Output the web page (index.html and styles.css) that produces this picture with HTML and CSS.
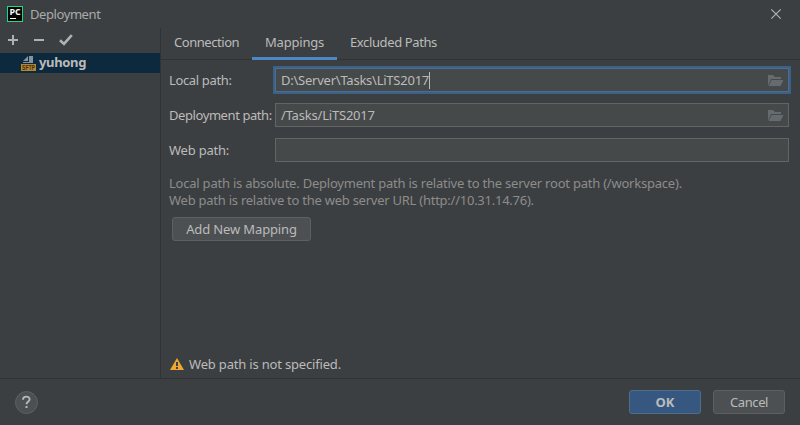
FILE: index.html
```html
<!DOCTYPE html>
<html lang="en">
<head>
<meta charset="utf-8">
<title>Deployment</title>
<link rel="stylesheet" href="styles.css">
</head>
<body>
<div class="dialog">
  <header class="titlebar">
    <svg class="logo" width="16" height="16" viewBox="0 0 16 16"><rect x=".5" y=".5" width="15" height="15" fill="#050505" stroke="#21d789"/><text x="2.4" y="9" class="logo-text" textLength="11.2" lengthAdjust="spacingAndGlyphs">PC</text><path d="M3 12.5h6" stroke="#fff"/></svg>
    <span class="title">Deployment</span>
    <svg class="close" width="10" height="10" viewBox="0 0 10 10"><path d="M.3.3l9.4 9.4M9.7.3L.3 9.7" stroke="#b4b6b7" stroke-width="1.1"/></svg>
  </header>
  <div class="main">
    <aside class="sidebar">
      <div class="toolbar">
        <svg width="10" height="10" viewBox="0 0 10 10"><path d="M5 0v10M0 5h10" stroke="#afb1b3" stroke-width="2"/></svg>
        <svg width="10" height="10" viewBox="0 0 10 10"><path d="M0 5h10" stroke="#afb1b3" stroke-width="2"/></svg>
        <svg class="check" width="14" height="12" viewBox="0 0 14 12"><path d="M1 6.2l4 3.7L12.8 1.2" fill="none" stroke="#afb1b3" stroke-width="2.6"/></svg>
      </div>
      <div class="server">
        <svg class="sftp-icon" width="15" height="16" viewBox="0 0 15 16"><path d="M2 6L7 1v5zM8 1h4v7H2V7h6z" fill="#87939a"/><rect y="9" width="15" height="7" fill="#b38632"/><text x="1" y="15" class="sftp" textLength="13" lengthAdjust="spacingAndGlyphs">SFTP</text></svg>
        <span class="server-name">yuhong</span>
      </div>
    </aside>
    <section class="content">
      <nav class="tabs">
        <div class="tab tab-connection"><span class="t-connection">Connection</span></div>
        <div class="tab tab-mappings active"><span class="t-mappings">Mappings</span></div>
        <div class="tab"><span class="t-excluded">Excluded Paths</span></div>
      </nav>
      <div class="form">
        <div class="row"><label class="l-local">Local path:</label>
          <div class="field focused"><span class="v-local">D:\Server\Tasks\LiTS2017</span><i class="caret"></i>
            <svg class="folder" width="16" height="12" viewBox="0 0 16 12"><path d="M0 11V0h5l2 2h6v2H3z" fill="#656b6e"/><path d="M3.5 5H15.5L12.5 11H.7z" fill="#656b6e"/></svg></div></div>
        <div class="row"><label class="l-deploy">Deployment path:</label>
          <div class="field"><span class="v-deploy">/Tasks/LiTS2017</span>
            <svg class="folder" width="16" height="12" viewBox="0 0 16 12"><path d="M0 11V0h5l2 2h6v2H3z" fill="#656b6e"/><path d="M3.5 5H15.5L12.5 11H.7z" fill="#656b6e"/></svg></div></div>
        <div class="row"><label class="l-web">Web path:</label><div class="field"></div></div>
      </div>
      <div class="hint"><div><span class="h-one">Local path is absolute. Deployment path is relative to the server root path (/workspace).</span></div><div><span class="h-two">Web path is relative to the web server URL (http://10.31.14.76).</span></div></div>
      <button class="btn add"><span class="b-add">Add New Mapping</span></button>
      <div class="warning">
        <svg width="14" height="12" viewBox="0 0 14 12"><path d="M7 0l7 12H0z" fill="#f0a732"/><path d="M6 4h2v4H6zM6 9h2v2H6z" fill="#3c3f41"/></svg>
        <span class="w-text">Web path is not specified.</span>
      </div>
    </section>
  </div>
  <footer class="footer">
    <svg class="help" width="23" height="23" viewBox="0 0 23 23"><circle cx="11.5" cy="11.5" r="11" fill="#4c5052" stroke="#5e6162"/><path d="M8 8.8c0-4.2 6.6-4 6.6-.5 0 2.4-3.1 2.5-3.1 5" fill="none" stroke="#b5b7b8" stroke-width="1.9"/><path d="M10.5 15h2v2h-2z" fill="#b5b7b8"/></svg>
    <button class="btn ok"><span class="b-ok">OK</span></button>
    <button class="btn cancel"><span class="b-cancel">Cancel</span></button>
  </footer>
</div>
</body>
</html>
```
FILE: styles.css
```css
* { box-sizing: border-box; }
body { margin: 0; background: #3c3f41; }
.dialog { width: 800px; height: 425px; display: flex; flex-direction: column; overflow: hidden; background: #3c3f41; color: #bbbbbb; font: 13px/18px "Noto Sans", "Open Sans", sans-serif; white-space: nowrap; }
svg { display: block; flex: none; overflow: visible; }
.titlebar { height: 28px; display: flex; align-items: center; padding: 0 19px 0 7px; }
.logo-text { font: bold 8px "Open Sans", sans-serif; fill: #fff; }
.title { margin-left: 7px; color: #a9abac; letter-spacing: -.42px; }
.close { margin-left: auto; }
.main { height: 350px; display: flex; }
.sidebar { width: 160px; }
.toolbar { height: 24px; margin-bottom: 1px; display: flex; align-items: center; gap: 16px; padding-left: 8px; }
.check { margin-left: -1px; }
.server { height: 20px; display: flex; align-items: center; padding-left: 21px; gap: 3px; background: #0d293e; font-weight: bold; }
.server-name { letter-spacing: -.35px; margin-top: -2px; }
.sftp { font: bold 7px/7px "Liberation Sans", sans-serif; fill: #3d2f14; }
.content { flex: 1; min-width: 0; border-left: 1px solid #323232; display: flex; flex-direction: column; }
.tabs { height: 32px; flex: none; display: flex; border-bottom: 1px solid #323232; }
.tab { height: 32px; padding: 5px 13px 0; border-bottom: 3px solid transparent; }
.tab-connection { width: 91px; }
.tab-mappings { width: 85px; }
.tab.active { border-bottom-color: #4a88c7; }
.t-connection { letter-spacing: -.45px; }
.t-mappings { letter-spacing: -.2px; }
.t-excluded { letter-spacing: -.38px; }
.form { padding: 8px 11px 0 8px; display: grid; gap: 11px; }
.row { height: 24px; display: flex; align-items: center; }
.row label { width: 106px; flex: none; }
.l-local { letter-spacing: -.35px; }
.l-deploy { letter-spacing: -.42px; }
.l-web { letter-spacing: -.22px; }
.v-local { letter-spacing: -.24px; }
.v-deploy { letter-spacing: -.2px; }
.field { width: 514px; height: 24px; display: flex; align-items: center; padding: 0 4px 0 5px; border: 1px solid #646464; background: #45494a; }
.field.focused { border-color: #466d94; box-shadow: 0 0 0 2px #3d6185; }
.caret { width: 1px; height: 17px; background: #bbbbbb; }
.folder { margin: 1px 0 0 auto; }
.hint { margin: 13px 0 0 8px; color: #8c8c8c; line-height: 17px; }
.h-one { letter-spacing: -.222px; }
.h-two { letter-spacing: -.25px; }
.btn { height: 24px; padding: 0; border: 1px solid #5e6060; border-radius: 3px; background: #4c5052; color: #bbbbbb; font: inherit; }
.add { width: 139px; margin: 8px 0 0 11px; }
.b-add { letter-spacing: -.13px; }
.warning { display: flex; align-items: center; gap: 5px; margin: auto 0 5px 9px; }
.w-text { letter-spacing: -.18px; }
.footer { height: 47px; display: flex; align-items: center; padding: 0 15px 1px; border-top: 1px solid #323232; }
.help { margin-top: 2px; }
.ok { width: 72px; margin-left: auto; background: #365880; border-color: #4c708c; font-weight: bold; }
.cancel { width: 72px; margin-left: 12px; }
.b-cancel { letter-spacing: -.4px; }
```
